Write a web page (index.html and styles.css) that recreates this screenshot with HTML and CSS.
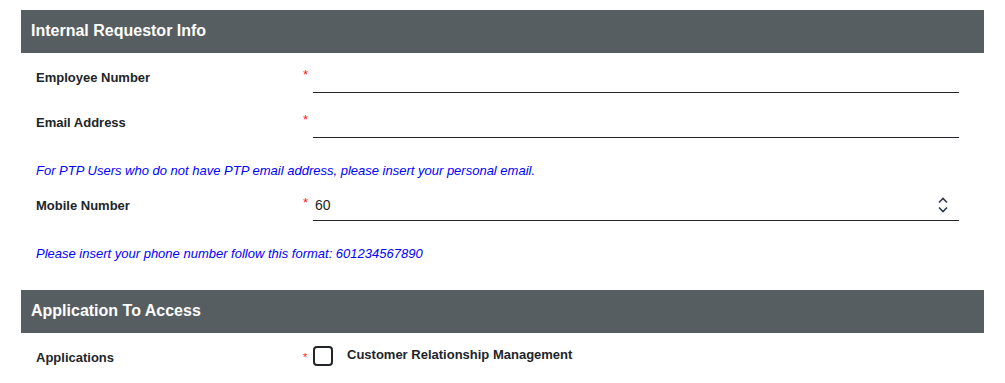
FILE: index.html
```html
<!DOCTYPE html>
<html lang="en">

<head>
    <meta charset="UTF-8">
    <meta name="viewport" content="width=device-width, initial-scale=1.0">
    <title>Access Request</title>
    <link rel="stylesheet" href="styles.css">
</head>

<body>
    <div class="request-form">
        <div class="section-title">Internal Requestor Info</div>
        <div class="form-row first">
            <label class="form-label">Employee Number</label>
            <span class="required">*</span>
            <input class="form-input" type="text" name="employee_no" autocomplete="off">
        </div>
        <div class="form-row">
            <label class="form-label">Email Address</label>
            <span class="required">*</span>
            <input class="form-input" type="text" name="email" autocomplete="off">
        </div>
        <div class="hint">For PTP Users who do not have PTP email address, please insert your personal email.</div>
        <div class="form-row mobile">
            <label class="form-label">Mobile Number</label>
            <span class="required">*</span>
            <div class="number-box">
                <input class="form-input" type="text" name="mobile" value="60" autocomplete="off">
                <svg class="spinner" width="12" height="18" viewBox="0 0 12 18">
                    <path d="M2 6.5 L6 2.5 L10 6.5" fill="none" stroke="#2f3a4a" stroke-width="1.6" />
                    <path d="M2 11.5 L6 15.5 L10 11.5" fill="none" stroke="#2f3a4a" stroke-width="1.6" />
                </svg>
            </div>
        </div>
        <div class="hint">Please insert your phone number follow this format: 601234567890</div>

        <div class="section-title second">Application To Access</div>
        <div class="form-row apps">
            <label class="form-label">Applications</label>
            <span class="required small">*</span>
            <label class="check-item">
                <span class="check-box"></span>
                <span class="check-text">Customer Relationship Management</span>
            </label>
        </div>
    </div>
</body>

</html>
```

FILE: styles.css
```css
* {
    margin: 0;
    padding: 0;
    box-sizing: border-box;
}

body {
    font-family: "Liberation Sans", Arial, sans-serif;
    color: #212529;
    background: #fff;
}

input {
    outline: none;
}

.request-form {
    padding: 10px 21px 0 21px;
}

.section-title {
    height: 43px;
    line-height: 41px;
    background: #575e61;
    color: #fff;
    font-size: 16px;
    font-weight: bold;
    padding-left: 10px;
}

.section-title.second {
    margin-top: 28px;
}

.form-row {
    display: flex;
    align-items: center;
    height: 32px;
    margin-top: 13px;
    padding: 0 25px 0 15px;
}

.form-row.first {
    margin-top: 8px;
}

.form-row.mobile {
    margin-top: 10px;
}

.form-label {
    width: 267px;
    flex-shrink: 0;
    font-size: 13px;
    font-weight: bold;
    color: #212529;
}

.required {
    width: 10px;
    flex-shrink: 0;
    color: #ff1a1a;
    font-size: 13px;
    align-self: flex-start;
    margin-top: 6px;
}

.form-input {
    flex: 1;
    height: 32px;
    border: none;
    border-bottom: 1px solid #212529;
    font-family: "Liberation Sans", Arial, sans-serif;
    font-size: 14px;
    color: #212529;
    padding: 0 2px;
    background: transparent;
}

.number-box {
    flex: 1;
    display: flex;
    position: relative;
}

.spinner {
    position: absolute;
    right: 10px;
    top: 7px;
}

.hint {
    margin-top: 25px;
    padding-left: 15px;
    line-height: 16px;
    font-size: 13px;
    font-style: italic;
    color: #0000ff;
}

.form-row.apps {
    margin-top: 10px;
    height: 28px;
}

.form-row.apps .form-label {
    margin-top: 1px;
}

.required.small {
    font-size: 11px;
    margin-top: 8px;
}

.check-item {
    display: flex;
    align-items: center;
    margin-top: -2px;
}

.check-box {
    width: 20px;
    height: 20px;
    border: 2px solid #212529;
    border-radius: 4px;
}

.check-text {
    margin-left: 14px;
    font-size: 13px;
    font-weight: bold;
    margin-top: -3px;
}
```
